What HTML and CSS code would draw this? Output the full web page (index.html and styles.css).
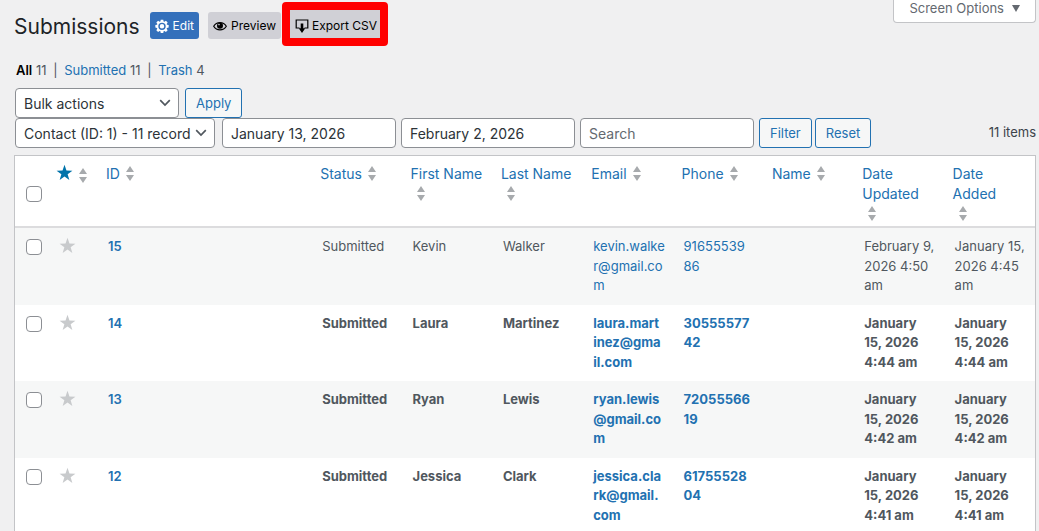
FILE: index.html
```html
<!DOCTYPE html>
<html lang="en">
<head>
<meta charset="utf-8">
<title>Submissions</title>
<meta name="viewport" content="width=device-width, initial-scale=1">
<link rel="stylesheet" href="styles.css">
</head>
<body>
<svg class="defs" aria-hidden="true">
  <symbol id="chevron" viewBox="0 0 14 10"><path d="M2.2 2.2 7 7l4.800-4.800" fill="none" stroke="currentColor" stroke-width="1.700"/></symbol>
  <symbol id="sort" viewBox="0 0 8 15"><path d="M4 0 8 6H0zM0 9h8L4 15z" fill="currentColor"/></symbol>
  <symbol id="star" viewBox="0 0 20 20"><path d="m10 1 2.300 6.600 7 .2-5.600 4.200 2 6.700L10 14.700l-5.700 4 2-6.700L.7 7.800l7-.2z" fill="currentColor"/></symbol>
</svg>
<main class="page">
  <header class="page-header">
    <h1 class="title">Submissions</h1>
    <a class="action action-edit" href="#">
      <svg class="action-icon" viewBox="0 0 20 20" aria-hidden="true"><path fill="currentColor" fill-rule="evenodd" d="M8.200 1h3.600l.5 2.500 1.200.5 2.100-1.400 2.500 2.500L16.700 7.200l.4 1.100 2.400.4v3.600l-2.400.4-.5 1.200 1.500 2-2.500 2.500-2.100-1.400-1.200.5-.5 2.500H8.200l-.5-2.500-1.200-.5-2.100 1.400-2.500-2.500 1.400-2-.5-1.200L.5 12.300V8.700l2.400-.4.5-1.200-1.500-2 2.500-2.500L6.500 4l1.200-.5zM10 5.200a5.300 5.300 0 1 0 0 10.600 5.300 5.300 0 0 0 0-10.600M10 7.300a3.200 3.200 0 1 1 0 6.400 3.200 3.200 0 0 1 0-6.400"/></svg>
      Edit</a>
    <a class="action action-preview" href="#">
      <svg class="action-icon" viewBox="0 0 14 14" aria-hidden="true"><path d="M.7 7.200C3.600 2.400 10.400 2.400 13.300 7.200 10.400 12 3.600 12 .7 7.200z" fill="none" stroke="currentColor" stroke-width="1.200"/><circle cx="7" cy="6.700" r="3" fill="currentColor"/><circle cx="6" cy="5.600" r=".8" fill="#d0d0d6"/></svg>
      Preview</a>
    <button class="action action-export" type="button">
      <svg class="action-icon" viewBox="0 0 14 14" aria-hidden="true"><path d="M4.500 9H1.200V1h11.600v8H9.500" fill="none" stroke="currentColor" stroke-width="1.200"/><path d="M5.700 4.500h2.600v4.700h2L7 14 3.700 9.200h2z" fill="currentColor"/></svg>
      Export CSV</button>
    <button class="screen-options" type="button">Screen Options
      <svg class="caret" viewBox="0 0 8 8" aria-hidden="true"><path d="M0 1h8L4 8z" fill="currentColor"/></svg>
    </button>
  </header>
  <nav class="views">
    <b class="current">All</b> 11 <span class="bar">|</span> <a href="#">Submitted</a> 11 <span class="bar">|</span> <a href="#">Trash</a> 4
  </nav>
  <form class="filters">
    <div class="row">
      <span class="select bulk"><select aria-label="Bulk actions"><option>Bulk actions</option></select><svg class="chevron"><use href="#chevron"/></svg></span>
      <button class="button" type="button">Apply</button>
    </div>
    <div class="row search-row">
      <span class="select form-pick"><select aria-label="Form"><option>Contact (ID: 1) - 11 record</option></select><svg class="chevron"><use href="#chevron"/></svg></span>
      <input class="field" type="text" aria-label="From date" value="January 13, 2026">
      <input class="field" type="text" aria-label="To date" value="February 2, 2026">
      <input class="field" type="text" aria-label="Search" placeholder="Search">
      <div class="buttons">
        <button class="button" type="button">Filter</button>
        <button class="button" type="button">Reset</button>
      </div>
      <span class="count">11 items</span>
    </div>
  </form>
  <table class="list">
    <colgroup><col class="col-check"><col class="col-star"><col class="col-id"><col span="8"></colgroup>
    <thead>
      <tr>
        <td class="check"><input type="checkbox" aria-label="Select all"></td>
        <th class="starred"><a href="#" aria-label="Starred"><svg class="star"><use href="#star"/></svg><svg class="sort"><use href="#sort"/></svg></a></th>
        <th><a href="#">ID<svg class="sort"><use href="#sort"/></svg></a></th>
        <th><a href="#">Status<svg class="sort"><use href="#sort"/></svg></a></th>
        <th><a href="#">First Name<svg class="sort"><use href="#sort"/></svg></a></th>
        <th><a href="#">Last Name<svg class="sort"><use href="#sort"/></svg></a></th>
        <th><a href="#">Email<svg class="sort"><use href="#sort"/></svg></a></th>
        <th><a href="#">Phone<svg class="sort"><use href="#sort"/></svg></a></th>
        <th><a href="#">Name<svg class="sort"><use href="#sort"/></svg></a></th>
        <th><a href="#">Date Updated<br><svg class="sort"><use href="#sort"/></svg></a></th>
        <th><a href="#">Date Added<br><svg class="sort"><use href="#sort"/></svg></a></th>
      </tr>
    </thead>
    <tbody>
      <tr>
        <td class="check"><input type="checkbox" aria-label="Select 15"></td>
        <td><svg class="star"><use href="#star"/></svg></td>
        <td><a class="id" href="#">15</a></td>
        <td>Submitted</td><td>Kevin</td><td>Walker</td>
        <td><a href="#">kevin.walke<wbr>r@gmail.co<wbr>m</a></td>
        <td><a href="#">91655539<wbr>86</a></td>
        <td></td><td>February 9, 2026 4:50 am</td><td>January 15, 2026 4:45 am</td>
      </tr>
      <tr class="unread">
        <td class="check"><input type="checkbox" aria-label="Select 14"></td>
        <td><svg class="star"><use href="#star"/></svg></td>
        <td><a class="id" href="#">14</a></td>
        <td>Submitted</td><td>Laura</td><td>Martinez</td>
        <td><a href="#">laura.mart<wbr>inez@gma<wbr>il.com</a></td>
        <td><a href="#">30555577<wbr>42</a></td>
        <td></td><td>January 15, 2026 4:44 am</td><td>January 15, 2026 4:44 am</td>
      </tr>
      <tr class="unread">
        <td class="check"><input type="checkbox" aria-label="Select 13"></td>
        <td><svg class="star"><use href="#star"/></svg></td>
        <td><a class="id" href="#">13</a></td>
        <td>Submitted</td><td>Ryan</td><td>Lewis</td>
        <td><a href="#">ryan.lewis<wbr>@gmail.co<wbr>m</a></td>
        <td><a href="#">72055566<wbr>19</a></td>
        <td></td><td>January 15, 2026 4:42 am</td><td>January 15, 2026 4:42 am</td>
      </tr>
      <tr class="unread">
        <td class="check"><input type="checkbox" aria-label="Select 12"></td>
        <td><svg class="star"><use href="#star"/></svg></td>
        <td><a class="id" href="#">12</a></td>
        <td>Submitted</td><td>Jessica</td><td>Clark</td>
        <td><a href="#">jessica.cla<wbr>rk@gmail.<wbr>com</a></td>
        <td><a href="#">61755528<wbr>04</a></td>
        <td></td><td>January 15, 2026 4:41 am</td><td>January 15, 2026 4:41 am</td>
      </tr>
    </tbody>
  </table>
</main>
</body>
</html>
```
FILE: styles.css
```css
* { box-sizing: border-box; }
html { overflow: hidden; }
body {
  margin: 0;
  background: #f0f0f1;
  color: #3c434a;
  font: 13px/1.5 Inter, "Liberation Sans", sans-serif;
}
a { color: #2271b1; text-decoration: none; }
button, input, select { font-family: inherit; margin: 0; }
.defs { display: none; }
.page { padding: 0 3px 0 14px; }

.page-header { display: flex; align-items: flex-start; height: 60px; }
.title {
  margin: 12px 10px 0 0;
  color: #1d2327;
  font-size: 21px;
  font-weight: 400;
  line-height: 30px;
}
.action {
  display: flex;
  align-items: center;
  gap: 4px;
  height: 27px;
  margin-top: 12px;
  padding: 0 5px;
  border: 0;
  border-radius: 3px;
  background: #d0d0d6;
  color: #000;
  font-size: 12px;
  font-weight: 400;
  line-height: 18px;
  white-space: nowrap;
}
.action-icon { width: 14px; height: 14px; flex: none; }
.action-edit { background: #3470bb; color: #fff; }
.action-preview { margin-left: 9px; }
.action-export {
  gap: 3px;
  height: 44px;
  margin: 2px 0 0 1px;
  padding: 3px 3px 0 5px;
  border: 8px solid #f00;
  border-radius: 4px;
}
.screen-options {
  display: flex;
  align-items: center;
  gap: 8px;
  height: 23px;
  margin-left: auto;
  padding: 0 15px 6px;
  border: 1px solid #c3c4c7;
  border-top: 0;
  border-radius: 0 0 4px 4px;
  background: #fff;
  color: #646970;
  font-size: 13px;
}
.caret { width: 8px; height: 8px; }

.views { padding: 0 2px; height: 28px; line-height: 20px; color: #50575e; }
.current { color: #000; font-weight: 600; }
.bar { margin: 0 3px; }

.filters { padding-left: 1px; }
.row { display: flex; align-items: center; gap: 6px; }
.search-row { gap: 5px; }
.select { display: grid; align-items: center; }
.select > * { grid-area: 1 / 1; }
.select select, .field {
  width: 100%;
  height: 30px;
  padding: 0 8px;
  border: 1px solid #8c8f94;
  border-radius: 4px;
  background: #fff;
  color: #2c3338;
  font-size: 14px;
}
.select select { appearance: none; }
.bulk { width: 164px; }
.form-pick { width: 200px; margin-right: 2px; }
.chevron {
  width: 14px;
  height: 10px;
  margin-right: 7px;
  justify-self: end;
  color: #50575e;
  pointer-events: none;
}
.row .field { width: 174px; }
.field::placeholder { color: #646970; opacity: 1; }
.button {
  height: 30px;
  padding: 0 10px;
  border: 1px solid #2271b1;
  border-radius: 3px;
  background: #f6f7f7;
  color: #2271b1;
  font-size: 13px;
}
.buttons { display: flex; gap: 3px; }
.count { margin-left: auto; white-space: nowrap; }

.list {
  width: 100%;
  margin-top: 7px;
  border: 1px solid #c3c4c7;
  border-spacing: 0;
  background: #fff;
  color: #50575e;
  table-layout: fixed;
}
.col-check { width: 34px; }
.col-star { width: 49px; }
.col-id { width: 21%; }
.list th {
  padding: 8px 8px 2px;
  font-size: 14px;
  font-weight: 400;
  line-height: 20px;
  text-align: left;
}
.list .starred { padding: 8px 0 0 7px; white-space: nowrap; }
.list th, .list td { vertical-align: top; }
.list thead > tr > * { border-bottom: 2px solid #dcdcde; }
.list td { padding: 9px 10px; }
.list tbody tr:nth-child(odd) { background: #f6f7f7; }
.list .check { padding: 11px 0 0 11px; line-height: 0; }
.list thead .check { padding-top: 30px; }
.check input {
  appearance: none;
  width: 16px;
  height: 16px;
  border: 1px solid #8c8f94;
  border-radius: 4px;
  background: #fff;
}
.id { font-weight: 600; }
.unread { font-weight: 700; }
.sort {
  display: inline-block;
  width: 8px;
  height: 15px;
  margin: 0 6px;
  color: #a7aaad;
  vertical-align: -2px;
}
.star { width: 17px; height: 17px; color: #c8cacc; vertical-align: 0; }
th .star { color: #0073aa; }
```
